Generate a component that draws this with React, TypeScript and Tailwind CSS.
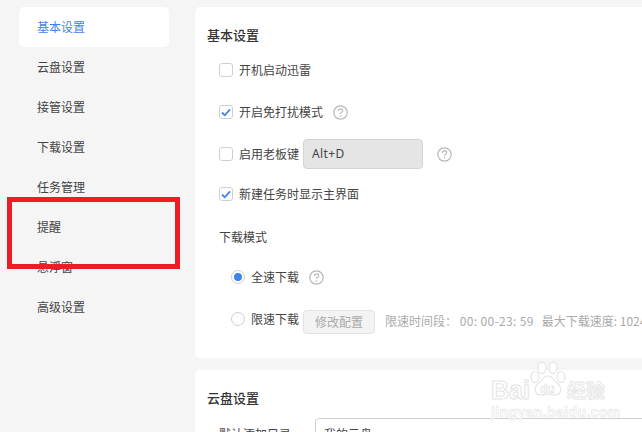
const FONT = "font-['Noto_Sans_CJK_SC','Noto_Sans',sans-serif]";

function Help() {
  return (
    <svg width="15" height="15" viewBox="0 0 15 15" className="shrink-0" fill="none">
      <circle cx="7.5" cy="7.5" r="6.7" stroke="#b8b8b8" strokeWidth="1.2" />
      <path d="M5.3 6c0-1.3 1-2.1 2.2-2.1s2.2.8 2.2 1.9c0 1.5-2.2 1.5-2.2 3.1" stroke="#b8b8b8" strokeWidth="1.1" />
      <circle cx="7.5" cy="11" r=".8" fill="#b8b8b8" />
    </svg>
  );
}

function Check({ on }: { on?: boolean }) {
  return (
    <span className="flex h-[14px] w-[14px] shrink-0 items-center justify-center rounded-[3px] border border-[#cfcfcf] bg-white">
      {on && (
        <svg width="10" height="9" viewBox="0 0 10 9" fill="none">
          <path d="M1 4.5 3.8 7.3 9 1.4" stroke="#3f83f0" strokeWidth="1.8" />
        </svg>
      )}
    </span>
  );
}

function Radio({ on }: { on?: boolean }) {
  return (
    <span className="flex h-[14px] w-[14px] shrink-0 items-center justify-center rounded-full border border-[#cfcfcf] bg-white">
      {on && <span className="h-2 w-2 rounded-full bg-[#3f83f0]" />}
    </span>
  );
}

const nav = ["基本设置", "云盘设置", "接管设置", "下载设置", "任务管理", "提醒", "悬浮窗", "高级设置"];

function Watermark() {
  return (
    <div className="absolute left-[491px] top-[362px] h-[58px] w-[120px] font-['Liberation_Sans',sans-serif] text-white">
      <svg width="38" height="36" viewBox="0 0 38 36" className="absolute left-[38px] top-0" fill="#fff" stroke="#e4e4e4" strokeWidth="1.2">
        <ellipse cx="6" cy="15" rx="4" ry="5.5" />
        <ellipse cx="13" cy="6" rx="4" ry="5.5" />
        <ellipse cx="24" cy="6" rx="4" ry="5.5" />
        <ellipse cx="32" cy="15" rx="4" ry="5.5" />
        <path d="M19 14c5 0 6 5 10 8 4 3 4 11-3 11-3 0-5-1-7-1s-4 1-7 1c-7 0-7-8-3-11 4-3 5-8 10-8z" />
      </svg>
      <span className="absolute left-[49px] top-[21px] text-[12px] font-bold leading-none [-webkit-text-stroke:0.6px_#e0e0e0]">du</span>
      <span className="absolute left-0 top-[16px] text-[25px] font-bold leading-none [-webkit-text-stroke:1px_#e4e4e4]">Bai</span>
      <span className={`${FONT} absolute left-[76px] top-[15px] text-[19px] font-bold leading-[26px] [-webkit-text-stroke:0.8px_#e4e4e4]`}>经验</span>
      <span className="absolute left-0 top-[43px] text-[14px] font-bold leading-none tracking-[0.4px] [-webkit-text-stroke:0.7px_#e8e8e8]">jingyan.baidu.com</span>
    </div>
  );
}

export default function App() {
  return (
    <div className={`${FONT} relative flex h-[432px] w-[642px] overflow-hidden bg-[#f5f5f5] text-[12px] text-[#444]`}>
      <aside className="ml-[19px] mt-[7px] w-[150px] shrink-0">
        {nav.map((n, i) => (
          <div
            key={n}
            className={`flex h-10 items-center rounded-[5px] pl-[18px] ${i === 0 ? "bg-white text-[#3f83f0]" : ""}`}
          >
            {n}
          </div>
        ))}
      </aside>

      <main className="ml-[26px] mt-[7px] flex w-[460px] shrink-0 flex-col gap-3">
        <section className="h-[351px] shrink-0 rounded-l-[5px] bg-white pl-3 pt-[18px]">
          <h2 className="flex h-5 items-center text-[13px] font-medium text-[#333]">基本设置</h2>
          <div className="ml-3 mt-[15px] flex h-5 items-center gap-[6px]">
            <Check />
            <span>开机启动迅雷</span>
          </div>
          <div className="ml-3 mt-[22px] flex h-5 items-center gap-[6px]">
            <Check on />
            <span>开启免打扰模式</span>
            <span className="ml-[4px]"><Help /></span>
          </div>
          <div className="ml-3 mt-[17px] flex h-[30px] items-center gap-[6px]">
            <Check />
            <span>启用老板键</span>
            <div className="ml-[-2px] flex h-[30px] w-[120px] items-center rounded-[4px] border border-[#d4d4d4] bg-[#e5e5e5] pl-[8px] font-['Noto_Sans',sans-serif] text-[12px] tracking-[0.4px]">
              Alt+D
            </div>
            <span className="ml-[8px]"><Help /></span>
          </div>
          <div className="ml-3 mt-[15px] flex h-5 items-center gap-[6px]">
            <Check on />
            <span>新建任务时显示主界面</span>
          </div>
          <div className="ml-3 mt-[23px] flex h-5 items-center">下载模式</div>
          <div className="ml-6 mt-[20px] flex h-5 items-center gap-[6px]">
            <Radio on />
            <span>全速下载</span>
            <span className="ml-[4px]"><Help /></span>
          </div>
          <div className="ml-6 mt-[18px] flex h-7 items-center gap-[6px] whitespace-nowrap">
            <Radio />
            <span>限速下载</span>
            <div className="ml-[-2px] mt-[6px] flex h-6 w-[72px] shrink-0 items-center justify-center rounded-[4px] border border-[#e2e2e2] bg-[#f3f3f3] text-[#aaa]">
              修改配置
            </div>
            <span className="ml-[4px] mt-1 text-[#aaa]">
              限速时间段：&nbsp;<span className="tracking-[0.35px]">00: 00-23: 59</span>
              <span className="ml-2">最大下载速度: 1024KB/s</span>
            </span>
          </div>
        </section>

        <section className="flex-1 rounded-l-[5px] bg-white pl-3 pt-[18px]">
          <h2 className="flex h-5 items-center text-[13px] font-medium text-[#333]">云盘设置</h2>
          <div className="ml-3 mt-[10px] flex items-start whitespace-nowrap">
            <span className="mt-[7px] w-[96px]">默认添加目录</span>
            <div className="h-[30px] flex-1 rounded-tl-[4px] border border-[#cfcfcf] pl-[8px] pt-[6px]">我的云盘</div>
          </div>
        </section>
      </main>

      <div className="absolute left-[7px] top-[197px] h-[72px] w-[173px] border-[5px] border-[#ee1c25]" />
      <Watermark />
    </div>
  );
}
